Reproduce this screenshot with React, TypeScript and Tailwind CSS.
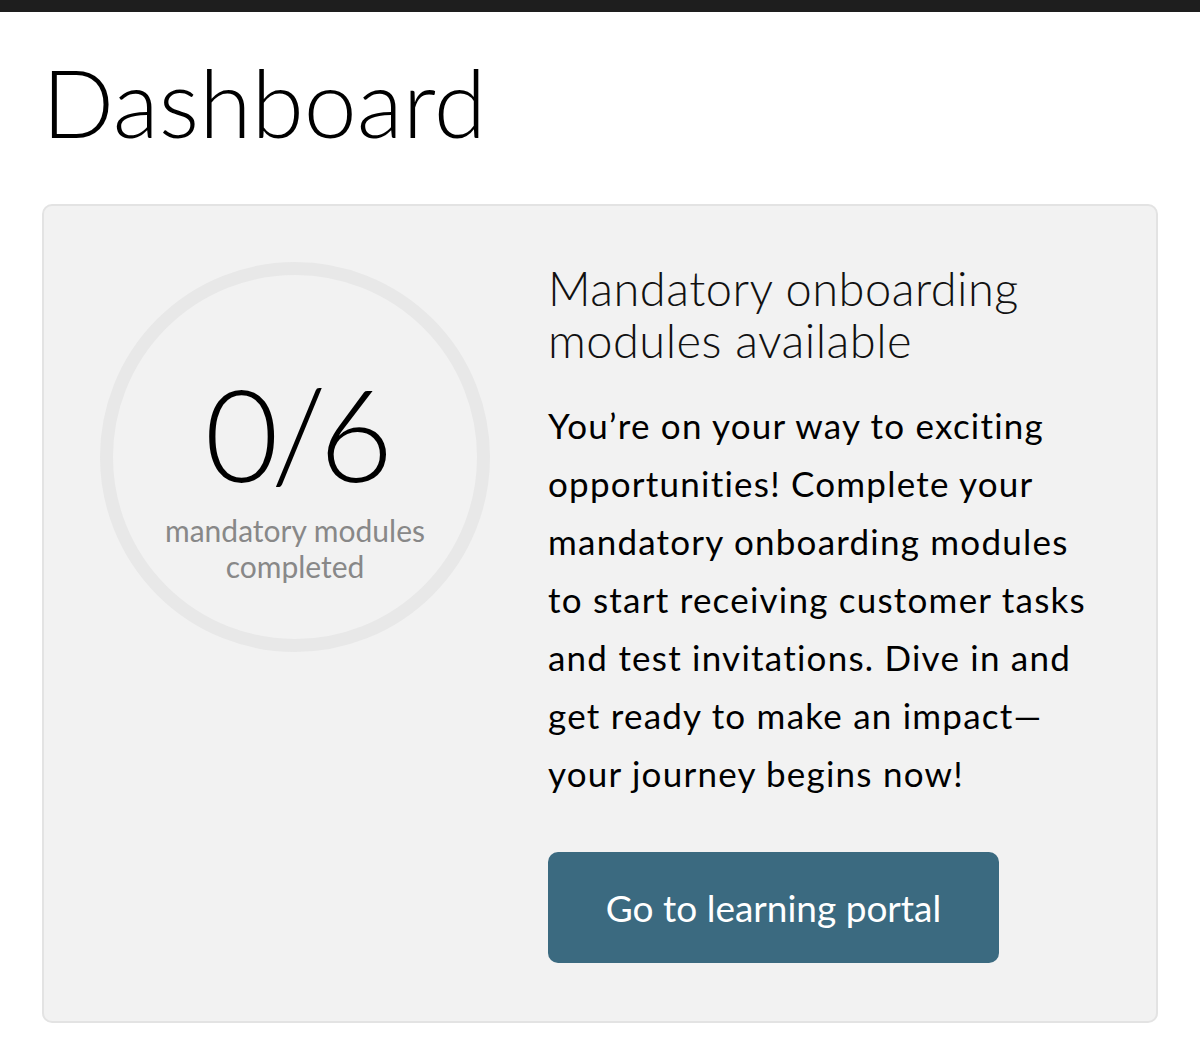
export default function App() {
  return (
    <div className="min-h-[1044px] bg-white" style={{ fontFamily: "Lato, 'Noto Sans', sans-serif" }}>
      <div className="h-3 bg-[#1e1e1e]" />
      <div className="px-[42px] pt-[42px]">
        <h1 className="text-[95px] font-light leading-none text-black">Dashboard</h1>
        <div className="mt-[55px] flex gap-[58px] rounded-[10px] border-2 border-[#e3e3e3] bg-[#f2f2f2] px-[56px] pb-[58px] pt-[56px]">
          <div className="flex h-[390px] w-[390px] shrink-0 flex-col items-center rounded-full border-[13px] border-[#e8e8e8] pt-[94px]">
            <div className="text-[128px] font-light leading-none tracking-[-0.06em] text-black">0/6</div>
            <div className="mt-[15px] text-center text-[30px] leading-[36px] text-[#888888]">
              mandatory modules
              <br />
              completed
            </div>
          </div>
          <div className="flex flex-col">
            <h2 className="text-[47px] font-light leading-[52px] tracking-[0.01em] text-[#111111]">
              Mandatory onboarding
              <br />
              modules available
            </h2>
            <p className="mt-[30px] text-[35px] leading-[58px] tracking-[0.035em] text-black">
              You’re on your way to exciting
              <br />
              opportunities! Complete your
              <br />
              mandatory onboarding modules
              <br />
              to start receiving customer tasks
              <br />
              and test invitations. Dive in and
              <br />
              get ready to make an impact—
              <br />
              your journey begins now!
            </p>
            <button className="mt-[50px] h-[111px] w-[451px] rounded-[10px] bg-[#3b6a80] text-[37px] text-white">
              Go to learning portal
            </button>
          </div>
        </div>
      </div>
    </div>
  );
}
